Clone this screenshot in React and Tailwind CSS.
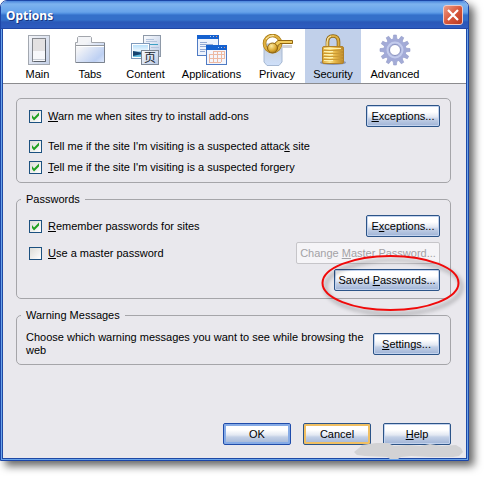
import { useState } from "react";
import clsx from "clsx";

const MainIcon = () => (
  <svg width="32" height="32" viewBox="0 0 32 32">
    <defs>
      <linearGradient id="plate" x1="0" y1="0" x2="1" y2="1">
        <stop offset="0" stopColor="#f4f5f8" />
        <stop offset="1" stopColor="#c3cfe6" />
      </linearGradient>
    </defs>
    <rect x="6.5" y="1.5" width="21" height="29" fill="url(#plate)" stroke="#a3a8b0" />
    <rect x="10.5" y="4.5" width="13" height="23" fill="#f7f8fb" stroke="#85888e" />
    <rect x="11" y="5" width="12" height="12" fill="#e3e1e2" />
    <path d="M12 27.5h11.500V6" fill="none" stroke="#5c626b" />
    <path d="M11 25.5h12" stroke="#c9ced6" />
  </svg>
);

const TabsIcon = () => (
  <svg width="32" height="32" viewBox="0 0 32 32">
    <defs>
      <linearGradient id="folder" x1="0" y1="0" x2="1" y2="1">
        <stop offset="0.3" stopColor="#f3f4f7" />
        <stop offset="0.8" stopColor="#bdd0f3" />
        <stop offset="1" stopColor="#dfe9fb" />
      </linearGradient>
    </defs>
    <path d="M1.5 28.5v-20h2V3.5l1-1h12l1 1v5h13v20z" fill="url(#folder)" stroke="#a3a6ac" />
    <path d="M2 11.5h28" stroke="#96999e" />
    <path d="M2 12.5h28" stroke="#fff" />
    <path d="M30.5 9v19.5H2" fill="none" stroke="#7b838f" />
  </svg>
);

const ContentIcon = () => (
  <svg width="32" height="32" viewBox="0 0 32 32">
    <defs>
      <linearGradient id="page" x1="0" y1="0" x2="1" y2="1">
        <stop offset="0" stopColor="#fbfcfe" />
        <stop offset="1" stopColor="#b9c9e4" />
      </linearGradient>
      <linearGradient id="sea" x1="0" y1="0" x2="0" y2="1">
        <stop offset="0" stopColor="#b9e0fa" />
        <stop offset="0.5" stopColor="#eef8ff" />
        <stop offset="0.6" stopColor="#4f9fd0" />
        <stop offset="1" stopColor="#6cc6e4" />
      </linearGradient>
    </defs>
    <rect x="13.5" y="1.5" width="17" height="21" fill="url(#page)" stroke="#8e99a8" />
    <path d="M16 5.5h8M16 7.5h11" stroke="#b4c4dc" />
    <path d="M19 10.5h9" stroke="#3ba0c4" />
    <path d="M21 13.5h8" stroke="#b4c4dc" />
    <rect x="1.5" y="9.5" width="18" height="15" fill="#fff" stroke="#7f99bb" />
    <rect x="3" y="11" width="15" height="12" fill="url(#sea)" />
    <path d="M3 17l5 1 4 1v1l-9 2z" fill="#17436f" />
    <rect x="11.5" y="16.5" width="17" height="14" fill="url(#page)" stroke="#7d8794" />
    <text x="14" y="28" fontSize="12" fill="#20262e" fontFamily="'Noto Sans CJK SC', sans-serif">
      页
    </text>
  </svg>
);

const ApplicationsIcon = () => (
  <svg width="32" height="32" viewBox="0 0 32 32">
    <rect x="1.5" y="1.5" width="21" height="20" fill="#eef3fc" stroke="#4f7bc4" />
    <rect x="1" y="1" width="22" height="4" fill="#1561cf" />
    <path d="M14 2.5h1M17 2.5h1" stroke="#a9cbf7" />
    <path d="M20 2.5h1" stroke="#f08a5c" />
    <path d="M4 8.5h7M4 10.5h13M4 12.5h7M4 15.5h6M4 17.5h5" stroke="#93a9d3" />
    <rect x="10.5" y="11.5" width="20" height="19" fill="#f4f6fc" stroke="#4f7bc4" />
    <rect x="10" y="11" width="21" height="5" fill="#1561cf" />
    <path d="M22 13.5h1M25 13.5h1" stroke="#a9cbf7" />
    <path d="M28 13.5h1" stroke="#f08a5c" />
    <path
      d="M17 17.5h12M13 20.5h16M13 24.5h16M13 28.5h12M13.5 20v8M17.5 17v11M21.5 17v11M25.5 17v11M28.5 17v8"
      fill="none"
      stroke="#edb9a2"
    />
  </svg>
);

const PrivacyIcon = () => (
  <svg width="34" height="32" viewBox="0 0 34 32">
    <defs>
      <linearGradient id="tag" x1="0" y1="0" x2="0" y2="1">
        <stop offset="0" stopColor="#c6cdd8" />
        <stop offset="1" stopColor="#cfe0fa" />
      </linearGradient>
      <radialGradient id="knob" cx="0.4" cy="0.3" r="0.8">
        <stop offset="0" stopColor="#fbe9a0" />
        <stop offset="0.6" stopColor="#d8a52e" />
        <stop offset="1" stopColor="#8c6311" />
      </radialGradient>
    </defs>
    <path d="M4 10h18v18l-3 3.500H7L4 28z" fill="url(#tag)" stroke="#a6b8d2" />
    <path d="M21 12.500h11" stroke="#d2d2d5" strokeWidth="3" />
    <circle cx="12.500" cy="9.500" r="8" fill="none" stroke="#a87c1a" strokeWidth="3.600" />
    <circle cx="12.500" cy="9.500" r="8" fill="none" stroke="#dfb040" strokeWidth="2.200" />
    <path d="M6 5q3-4 8-3.500" fill="none" stroke="#fbeeb5" />
    <path d="M13 11l5-4.500h14.500v3H20l-4 4z" fill="#f2cc5e" stroke="#91660f" />
    <circle cx="12.500" cy="14" r="5" fill="url(#knob)" stroke="#8c6311" />
  </svg>
);

const SecurityIcon = () => (
  <svg width="32" height="32" viewBox="0 0 32 32">
    <defs>
      <linearGradient id="brass" x1="0" y1="0" x2="1" y2="0">
        <stop offset="0" stopColor="#dfa93a" />
        <stop offset="0.35" stopColor="#fbe48c" />
        <stop offset="0.6" stopColor="#e8b848" />
        <stop offset="1" stopColor="#b9862a" />
      </linearGradient>
    </defs>
    <ellipse cx="16" cy="28.500" rx="13" ry="2.500" fill="#8b97b5" />
    <path d="M10.500 15V8q0-6 5.500-6t5.500 6v7" fill="none" stroke="#8b6415" strokeWidth="3.600" />
    <path d="M10.500 15V8q0-6 5.500-6t5.500 6v7" fill="none" stroke="#dcae42" strokeWidth="2" />
    <path d="M10 13V8q0-5 4-6" fill="none" stroke="#faedb8" />
    <rect x="5.500" y="12.500" width="21" height="17" rx="1.500" fill="url(#brass)" stroke="#b0812a" />
    <path d="M6 16.500h20M6 19.500h20M6 22.500h20M6 25.500h20" stroke="#cb9a34" />
    <path d="M7 14.500h17M7 17.500h9M7 20.500h9M7 23.500h9M7 26.500h9" stroke="#fdf0ae" />
  </svg>
);

const teeth = [0, 30, 60, 90, 120, 150, 180, 210, 240, 270, 300, 330];

const AdvancedIcon = () => (
  <svg width="32" height="32" viewBox="0 0 32 32">
    {teeth.map((angle) => (
      <path
        key={angle}
        d="M14 6l.6-5h2.800l.6 5z"
        fill="#a3abd6"
        stroke="#949cc9"
        strokeWidth="0.600"
        transform={`rotate(${angle} 16 16)`}
      />
    ))}
    <circle cx="16" cy="16" r="8.500" fill="none" stroke="#a3abd8" strokeWidth="6" />
    <circle cx="16" cy="16" r="7.500" fill="none" stroke="#c3cbec" strokeWidth="2" />
    <circle cx="16" cy="16" r="5.500" fill="#fff" stroke="#8790bf" />
  </svg>
);

const tabs = [
  { name: "Main", icon: MainIcon, width: "w-[51px]" },
  { name: "Tabs", icon: TabsIcon, width: "w-[54px]" },
  { name: "Content", icon: ContentIcon, width: "w-[57px]" },
  { name: "Applications", icon: ApplicationsIcon, width: "w-[75px]" },
  { name: "Privacy", icon: PrivacyIcon, width: "w-[56px]" },
  { name: "Security", icon: SecurityIcon, width: "w-[56px]" },
  { name: "Advanced", icon: AdvancedIcon, width: "w-[68px]" },
];

const rings = {
  normal: "enabled:border-[#2c5488] enabled:shadow-[inset_0_0_0_1px_#c3d3ee]",
  primary: "enabled:border-[#1f4cab] enabled:shadow-[inset_0_0_0_2px_#86abe6]",
  focused: "enabled:border-[#2c5488] enabled:shadow-[inset_0_0_0_2px_#f0bf62]",
};

const Button = ({ children, className, ring = "normal", ...props }) => (
  <button
    type="button"
    className={clsx(
      "h-[22px] shrink-0 rounded-[2px] border whitespace-nowrap leading-[14px]",
      "disabled:border-[#c6c5c9] disabled:bg-[#f5f4f7] disabled:text-[#a3a2a6]",
      "enabled:bg-[linear-gradient(#ffffff_30%,#e3e8f2_55%,#c3d0e6_65%,#9fb3d6)]",
      rings[ring],
      className
    )}
    {...props}
  >
    {children}
  </button>
);

const Checkbox = ({ children, defaultChecked }) => (
  <label className="flex items-center gap-[6px]">
    <span className="grid size-[13px] shrink-0">
      <input
        type="checkbox"
        defaultChecked={defaultChecked}
        className="peer col-start-1 row-start-1 size-[13px] appearance-none border border-[#1c5180] bg-linear-to-br from-[#dcdcd7] to-white"
      />
      <svg
        viewBox="0 0 13 13"
        className="pointer-events-none invisible col-start-1 row-start-1 size-[13px] peer-checked:visible"
      >
        <path d="M3 5v3l2 2.500 5-5V2.500L5 7.500z" fill="#21a121" />
      </svg>
    </span>
    <span>{children}</span>
  </label>
);

const Group = ({ title, children }) => (
  <fieldset className="min-w-0 rounded-[5px] border border-[#a5a5a9]">
    {title && <legend className="ml-[4px] px-[5px] leading-[14px]">{title}</legend>}
    {children}
  </fieldset>
);

const App = () => {
  const [active, setActive] = useState("Security");

  return (
    <div className="min-h-screen bg-white pr-4 pb-4 font-['Liberation_Sans',sans-serif] text-[11px] leading-[13px] text-black [&_u]:underline-offset-1">
      <div className="rounded-t-[7px] border border-[#1c46a8] bg-[#e9e8ed] shadow-[5px_5px_8px_0_#00000099]">
        {/* Title bar */}
        <div className="flex h-[28px] items-center justify-between rounded-t-[6px] border-b border-[#2046a4] bg-[linear-gradient(#4b86dc_0,#7db3ef_3px,#67a3ea_11px,#4888dc_13px,#3470ca_14px,#3470ca_19px,#2a58b8_21px,#2d5cc0_27px)] px-[5px]">
          <h1 className="pt-[2px] font-['Noto_Sans',sans-serif] text-[12px] leading-[18px] font-bold text-white [text-shadow:1px_1px_#16337c]">
            Options
          </h1>
          <button
            type="button"
            aria-label="Close"
            className="flex size-[20px] items-center justify-center rounded-[3px] border border-[#f0c9c4] bg-linear-to-br from-[#eb9a84] via-[#d9573b] to-[#b93a20]"
          >
            <svg width="12" height="12" viewBox="0 0 12 12">
              <path d="M1 1l10 10M11 1L1 11" stroke="#fff" strokeWidth="2.200" />
            </svg>
          </button>
        </div>

        <div className="border-x border-b border-[#6aa4ea]">
          <div className="border-x border-b border-[#1f49a5]">
            {/* Toolbar */}
            <nav className="flex h-[55px] border-b border-[#8b8b8e] bg-white pl-[9px]">
              {tabs.map(({ name, icon: Icon, width }) => (
                <button
                  key={name}
                  type="button"
                  onClick={() => setActive(name)}
                  className={clsx(
                    "flex flex-col items-center gap-[2px] pt-[5px]",
                    width,
                    active === name && "bg-[#c1d0ea]"
                  )}
                >
                  <Icon />
                  <span>{name}</span>
                </button>
              ))}
            </nav>

            <div className="pt-[14px] pr-[15px] pb-[13px] pl-[13px]">
              <div className="flex flex-col gap-[9px]">
                <Group>
                  <div className="pt-[6px] pr-[10px] pb-[4px] pl-[12px]">
                    <div className="mb-[9px] flex items-center justify-between">
                      <Checkbox defaultChecked>
                        <u>W</u>arn me when sites try to install add-ons
                      </Checkbox>
                      <Button className="w-[74px]">
                        <u>E</u>xceptions...
                      </Button>
                    </div>
                    <div className="flex h-[21px] items-center">
                      <Checkbox defaultChecked>
                        Tell me if the site I'm visiting is a suspected attac<u>k</u> site
                      </Checkbox>
                    </div>
                    <div className="flex h-[21px] items-center">
                      <Checkbox defaultChecked>
                        <u>T</u>ell me if the site I'm visiting is a suspected forgery
                      </Checkbox>
                    </div>
                  </div>
                </Group>

                <Group title="Passwords">
                  <div className="flex flex-col gap-[5px] pt-[9px] pr-[10px] pb-[7px] pl-[12px]">
                    <div className="flex items-center justify-between">
                      <Checkbox defaultChecked>
                        <u>R</u>emember passwords for sites
                      </Checkbox>
                      <Button className="w-[74px]">
                        E<u>x</u>ceptions...
                      </Button>
                    </div>
                    <div className="flex items-center justify-between">
                      <Checkbox>
                        <u>U</u>se a master password
                      </Checkbox>
                      <Button className="w-[144px]" disabled>
                        Change <u>M</u>aster Password...
                      </Button>
                    </div>
                    <div className="relative flex self-end">
                      <Button className="w-[106px]">
                        Saved <u>P</u>asswords...
                      </Button>
                      <svg
                        width="150"
                        height="70"
                        viewBox="0 0 150 70"
                        className="pointer-events-none absolute top-[-18px] left-[-16px] max-w-none drop-shadow-[3px_4px_2px_#00000066]"
                      >
                        <ellipse cx="72.500" cy="32" rx="68" ry="27" fill="none" stroke="#f00a0a" strokeWidth="2" />
                      </svg>
                    </div>
                  </div>
                </Group>

                <Group title="Warning Messages">
                  <div className="flex items-center justify-between pt-[9px] pr-[10px] pb-[7px] pl-[9px]">
                    <p className="max-w-[340px]">
                      Choose which warning messages you want to see while browsing the web
                    </p>
                    <Button className="w-[67px]">
                      <u>S</u>ettings...
                    </Button>
                  </div>
                </Group>
              </div>

              {/* Dialog buttons */}
              <div className="mt-[58px] flex justify-end gap-[12px]">
                <Button className="w-[68px]" ring="primary">
                  OK
                </Button>
                <Button className="w-[68px]" ring="focused">
                  Cancel
                </Button>
                <div className="relative flex">
                  <Button className="w-[68px]">
                    <u>H</u>elp
                  </Button>
                  <svg
                    width="110"
                    height="16"
                    viewBox="0 0 110 16"
                    className="pointer-events-none absolute top-[20px] left-[-29px] max-w-none"
                  >
                    <path
                      d="M0 9l5-4 3-3 14-2h12l6 3 14-1 12 1 10-2 12 2 14-1 5 3 2 4-4 4-6 1-22 0-20-1-10 1-3 2h-8l-3-2-22-1-8-1z"
                      fill="#d2d2d4"
                    />
                  </svg>
                </div>
              </div>
            </div>
          </div>
        </div>
      </div>
    </div>
  );
};

export default App;
